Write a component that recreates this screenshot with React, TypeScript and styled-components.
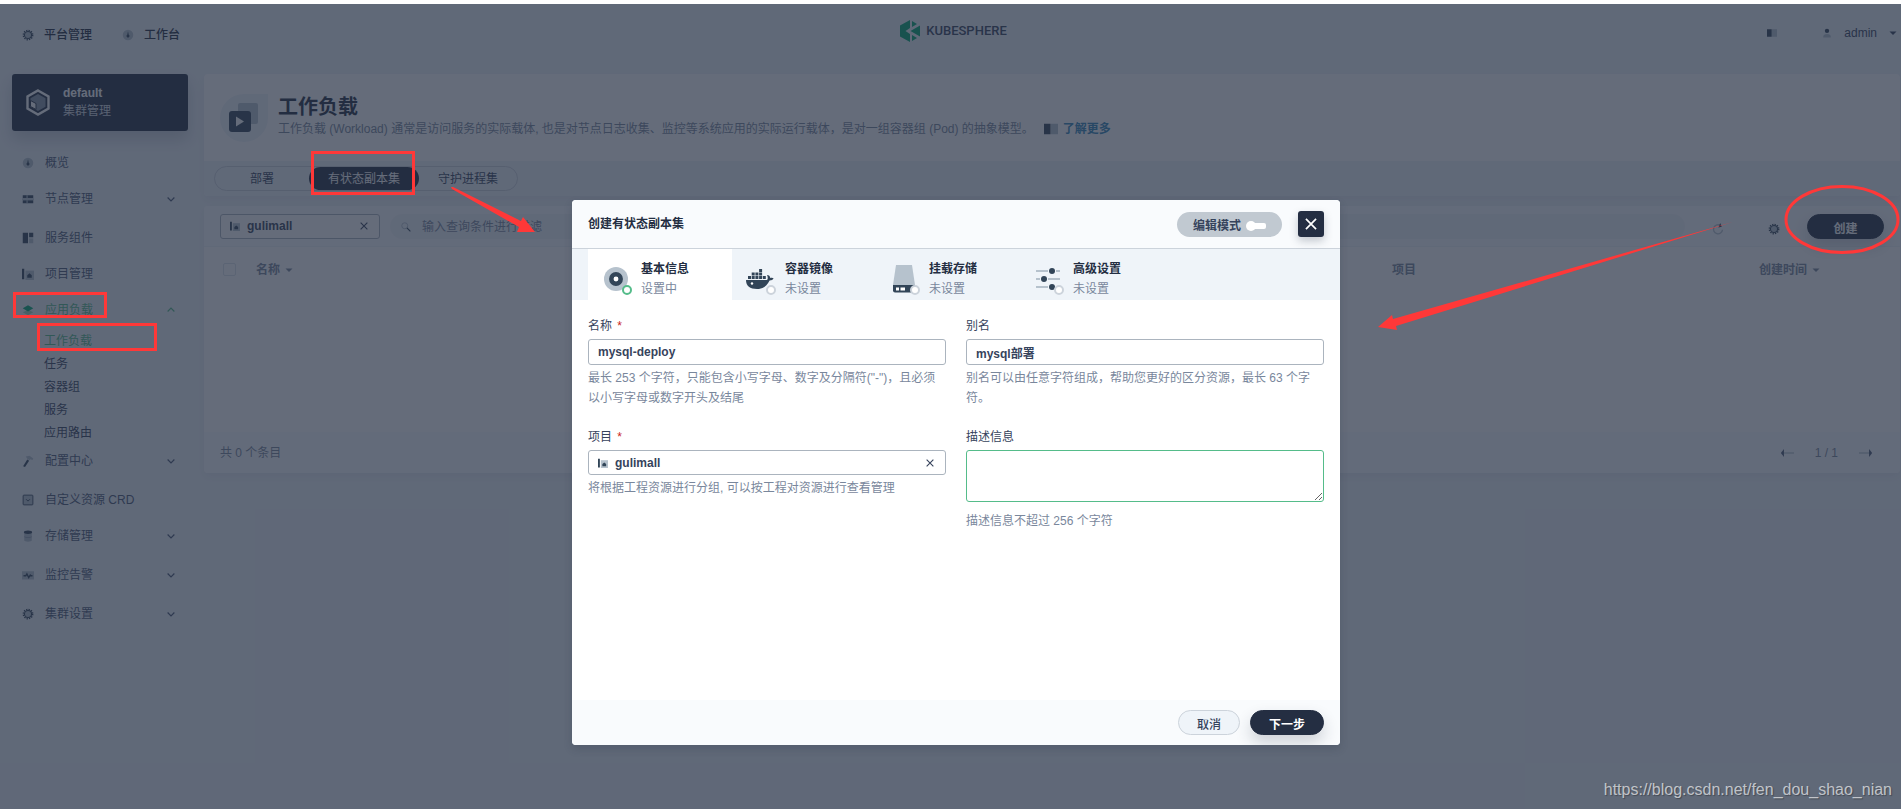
import React from 'react';
import styled, { createGlobalStyle, css } from 'styled-components';

const Global = createGlobalStyle`
  *, *::before, *::after { box-sizing: border-box; }
  html, body { margin: 0; padding: 0; }
  body {
    background: #eff4f9;
    color: #242e42;
    font: 400 12px/20px "Liberation Sans", "Noto Sans CJK SC", sans-serif;
    overflow: hidden;
  }
  button, input, textarea { font: inherit; color: inherit; margin: 0; }
  button { cursor: pointer; }
  a { color: inherit; text-decoration: none; }
  ul { list-style: none; margin: 0; padding: 0; }
  h1, h2, p { margin: 0; }
`;

/* ---------- icons ---------- */

const Svg = styled.svg`
  display: block;
  flex: none;
`;

type IconName =
  | 'gear' | 'gauge' | 'nodes' | 'grid' | 'project' | 'layers' | 'hammer'
  | 'select' | 'database' | 'monitor' | 'book' | 'human' | 'search' | 'refresh'
  | 'close' | 'down' | 'up' | 'caret' | 'prev' | 'next';

const D = '#324558';
const L = '#b6c2cd';

const glyphs: Record<IconName, React.ReactNode> = {
  gear: (
    <>
      <circle cx="8" cy="8" r="6.200" fill="none" stroke={D} strokeWidth="2" strokeDasharray="1.700 1.546" />
      <circle cx="8" cy="8" r="4.700" fill={L} stroke={D} strokeWidth="1.400" />
    </>
  ),
  gauge: (
    <>
      <circle cx="8" cy="8" r="7" fill={L} />
      <path d="M8 3l1 4.500a2 2 0 1 1-2 0z" fill={D} />
    </>
  ),
  nodes: (
    <>
      <path d="M1 3h14v4H1zM1 9.500h14v4H1z" fill={D} />
      <path d="M0 7h16v2.500H0z" fill={L} />
      <path d="M6 3h1.500v4H6zM6 9.500h1.500v4H6z" fill={L} />
    </>
  ),
  grid: (
    <>
      <path d="M1 1h7v14H1zM9.500 1H15v6H9.500z" fill={D} />
      <path d="M9.500 8.500H15V15H9.500z" fill={L} />
    </>
  ),
  project: (
    <>
      <path d="M4.500 3.500H16V16H4.500z" fill={L} />
      <path d="M0 1h3v14H0zM7 9.500L10 7l3 2.500V13H7z" fill={D} />
    </>
  ),
  layers: (
    <>
      <path d="M1 11l7-3.500 7 3.500-7 4z" fill="#a2d8bb" />
      <path d="M1 5.500L8 1.500l7 4L8 10z" fill="#00aa72" />
    </>
  ),
  hammer: (
    <>
      <path d="M5 2l5-1 5 3.500-1 2-3-1-1 1.500-3-2z" fill={L} />
      <path d="M7 6l2.500 1.500L4 16l-2.500-1z" fill={D} />
    </>
  ),
  select: (
    <>
      <rect x="1.500" y="1.500" width="13" height="13" rx="1" fill={L} stroke={D} strokeWidth="1.200" />
      <path d="M5.500 7L8 9.500 10.500 7" fill="none" stroke={D} strokeWidth="1.300" />
    </>
  ),
  database: (
    <>
      <path d="M3 4h10v10c0 2-10 2-10 0z" fill={L} />
      <path d="M3 9c2 1.500 8 1.500 10 0" fill="none" stroke="#8696a5" />
      <ellipse cx="8" cy="3" rx="5.500" ry="2.200" fill={D} />
    </>
  ),
  monitor: (
    <>
      <rect x="0" y="3" width="16" height="11" fill={L} />
      <path d="M2 9h3l1.500-2.500 2.500 5 2-3.500 1 1h2" fill="none" stroke={D} strokeWidth="1.800" />
    </>
  ),
  book: (
    <>
      <path d="M0 2h7.500v12H0z" fill={D} />
      <path d="M8 2h8v12H8z" fill={L} />
    </>
  ),
  human: (
    <>
      <circle cx="8" cy="4.500" r="3.500" fill={D} />
      <path d="M2 14c0-3 2-4.500 6-4.500s6 1.500 6 4.500v1H2z" fill={L} />
    </>
  ),
  search: (
    <>
      <circle cx="6" cy="6" r="4.800" fill="none" stroke={L} strokeWidth="1.600" />
      <path d="M9.500 9.500L15 15" stroke={D} strokeWidth="1.800" />
    </>
  ),
  refresh: (
    <>
      <path d="M11.500 3.500A6 6 0 1 0 14 9" fill="none" stroke={L} strokeWidth="1.800" />
      <path d="M11 0l2 5-4.500 1z" fill={D} />
    </>
  ),
  close: <path d="M3.500 3.500l9 9M12.500 3.500l-9 9" stroke="currentColor" strokeWidth="1.500" />,
  down: <path d="M3.500 6L8 10.500 12.500 6" fill="none" stroke="currentColor" strokeWidth="1.600" />,
  up: <path d="M3.500 10L8 5.500l4.500 4.500" fill="none" stroke="currentColor" strokeWidth="1.600" />,
  caret: <path d="M1 5h14l-7 7z" fill="currentColor" />,
  prev: (
    <>
      <path d="M4 8h12" stroke={L} strokeWidth="1.500" />
      <path d="M4.500 3.500v9L1 8z" fill="#4a5974" />
    </>
  ),
  next: (
    <>
      <path d="M0 8h12" stroke={L} strokeWidth="1.500" />
      <path d="M11.500 3.500v9L15 8z" fill="#4a5974" />
    </>
  ),
};

const Icon = ({ name, size = 12 }: { name: IconName; size?: number }) => (
  <Svg width={size} height={size} viewBox="0 0 16 16" aria-hidden="true">
    {glyphs[name]}
  </Svg>
);

/* ---------- page shell ---------- */

const Page = styled.div`
  position: relative;
  min-height: 100vh;
  border-top: 4px solid #fff;
`;

const TopBar = styled.header`
  display: grid;
  grid-template-columns: 1fr auto 1fr;
  align-items: start;
  height: 70px;
  padding: 0 4px 0 10px;
`;

const TopNav = styled.nav`
  display: flex;
  gap: 30px;
  padding: 21px 0 0 12px;
`;

const TopLink = styled.a`
  display: flex;
  align-items: center;
  gap: 10px;
  color: #242e42;
  font-weight: 500;
`;

const Logo = styled.a`
  display: flex;
  align-items: center;
  gap: 6px;
  height: 22px;
  margin: 16px 0 0;
  color: #36435c;
  font: 500 13px/22px Roboto, "Liberation Sans", sans-serif;
`;

const TopRight = styled.div`
  display: flex;
  justify-content: flex-end;
  align-items: center;
  gap: 45px;
  padding-top: 19px;
`;

const PlainButton = styled.button`
  display: flex;
  align-items: center;
  padding: 0;
  border: 0;
  background: none;
`;

const UserButton = styled(PlainButton)`
  gap: 12px;
  color: #36435c;
`;

const Body = styled.div`
  display: flex;
  gap: 16px;
  padding: 0 1px 0 12px;
`;

/* ---------- sidebar ---------- */

const Sidebar = styled.aside`
  flex: none;
  width: 176px;
`;

const ClusterCard = styled.a`
  display: flex;
  align-items: center;
  gap: 13px;
  height: 57px;
  margin-bottom: 14px;
  padding: 0 14px;
  border-radius: 3px;
  background: #242e42;
  color: #fff;
  box-shadow: 0 8px 16px rgba(36, 46, 66, 0.2);
`;

const ClusterText = styled.span`
  display: flex;
  flex-direction: column;
  padding-bottom: 2px;
  color: #d5dbe2;
  line-height: 18px;
  strong { color: #fff; }
`;

const NavRow = styled.a<{ $group?: boolean; $active?: boolean }>`
  display: flex;
  align-items: center;
  gap: 11px;
  height: 36px;
  margin-bottom: ${(p) => (p.$group && !p.$active ? 3 : 0)}px;
  padding: 0 11px 0 10px;
  color: ${(p) => (p.$active ? '#55bc8a' : '#4a5974')};
`;

const NavLabel = styled.span`
  flex: 1;
`;

const SubNav = styled.ul`
  margin-bottom: -2px;
  padding: 2px 0 0 32px;
`;

const SubLink = styled.a<{ $active?: boolean }>`
  display: block;
  line-height: 23px;
  color: ${(p) => (p.$active ? '#55bc8a' : '#36435c')};
`;

/* ---------- main column ---------- */

const Main = styled.main`
  display: flex;
  flex: 1;
  flex-direction: column;
  gap: 10px;
  min-width: 0;
`;

const Panel = styled.section`
  border-radius: 4px;
  background: #fff;
  box-shadow: 0 4px 8px rgba(36, 46, 66, 0.06);
`;

const Intro = styled.div`
  display: flex;
  align-items: center;
  gap: 10px;
  height: 87px;
  padding: 0 16px;
`;

const IntroText = styled.div`
  padding-bottom: 1px;
`;

const Title = styled.h1`
  font-size: 20px;
  line-height: 24px;
`;

const Lead = styled.p`
  display: flex;
  align-items: center;
  gap: 10px;
  color: #79879c;
`;

const MoreLink = styled.a`
  display: flex;
  align-items: center;
  gap: 5px;
  color: #3385b8;
  font-weight: 700;
`;

const TabBar = styled.div`
  display: flex;
  height: 35px;
  padding: 5px 10px;
  border-radius: 0 0 4px 4px;
  background: #eff4f9;
`;

const Pills = styled.div`
  display: flex;
  height: 25px;
  border: 1px solid #ccd3db;
  border-radius: 13px;
`;

const Pill = styled.button<{ $active?: boolean }>`
  min-width: 94px;
  padding: 0 19px;
  border: 0;
  border-radius: 12px;
  background: ${(p) => (p.$active ? '#242e42' : 'transparent')};
  color: ${(p) => (p.$active ? '#fff' : '#36435c')};
`;

const Toolbar = styled.div`
  display: flex;
  align-items: center;
  gap: 10px;
  height: 41px;
  padding: 0 16px;
  border-bottom: 1px solid #eff4f9;
  background: #f9fbfd;
  border-radius: 4px 4px 0 0;
`;

const SelectBox = styled.div`
  display: flex;
  align-items: center;
  gap: 7px;
  width: 160px;
  height: 25px;
  padding: 0 9px;
  border: 1px solid #abb4be;
  border-radius: 3px;
  background: #fff;
  color: #36435c;
  font-weight: 700;
`;

const WideSelect = styled(SelectBox)`
  width: 100%;
`;

const BareInput = styled.input`
  flex: 1;
  min-width: 0;
  height: 20px;
  padding: 0;
  border: 0;
  outline: 0;
  background: none;
  &::placeholder { color: #79879c; opacity: 1; }
`;

const SearchBox = styled.label`
  display: flex;
  flex: 1;
  align-items: center;
  gap: 11px;
  height: 25px;
  padding: 1px 11px 0;
  border-radius: 13px;
  background: #eff4f9;
`;

const Tools = styled.div`
  display: flex;
  align-items: center;
  gap: 44px;
  padding: 5px 17px 0;
`;

const buttonBase = css`
  height: 25px;
  border-radius: 13px;
  line-height: 20px;
`;

const DarkButton = styled.button<{ $wide?: boolean }>`
  ${buttonBase}
  width: ${(p) => (p.$wide ? 77 : 74)}px;
  padding: 4px 0 0;
  border: 1px solid #242e42;
  background: #242e42;
  color: #fff;
  font-weight: 700;
  box-shadow: 0 8px 16px rgba(36, 46, 66, 0.2);
`;

const Table = styled.table`
  width: 100%;
  height: 185px;
  border-collapse: collapse;
  table-layout: fixed;
  color: #79879c;
  th { padding: 0; height: 45px; text-align: left; font-weight: 700; }
`;

const Col = styled.col<{ $width?: number }>`
  width: ${(p) => (p.$width ? `${p.$width}px` : 'auto')};
`;

const Check = styled.input`
  appearance: none;
  display: block;
  width: 13px;
  height: 13px;
  border: 1px solid #dde3ea;
  border-radius: 2px;
`;

const CheckHead = styled.th`
  ${Check} { margin-left: 19px; }
`;

const Sort = styled(PlainButton)`
  gap: 5px;
  font-weight: 700;
`;

const PanelFoot = styled.div`
  display: flex;
  align-items: center;
  justify-content: space-between;
  height: 41px;
  padding: 0 27px 0 16px;
  border-radius: 0 0 4px 4px;
  background: #f9fbfd;
  color: #79879c;
`;

const Pager = styled.div`
  display: flex;
  align-items: center;
  gap: 21px;
`;

/* ---------- dialog ---------- */

const Mask = styled.div`
  position: absolute;
  inset: 0;
  display: flex;
  align-items: flex-start;
  justify-content: center;
  padding: 196px 0 0 11px;
  background: rgba(35, 45, 65, 0.7);
`;

const Dialog = styled.section`
  display: flex;
  flex-direction: column;
  width: 768px;
  min-height: 545px;
  border-radius: 4px;
  background: #fff;
  box-shadow: 0 4px 8px rgba(36, 46, 66, 0.2);
  overflow: hidden;
`;

const DialogHead = styled.header`
  display: flex;
  align-items: center;
  gap: 16px;
  height: 49px;
  padding: 0 16px;
  border-bottom: 1px solid #ccd3db;
  background: #f9fbfd;
`;

const DialogTitle = styled.h2`
  flex: 1;
  font-size: 12px;
  line-height: 20px;
`;

const ModeButton = styled.button`
  ${buttonBase}
  display: flex;
  align-items: center;
  justify-content: center;
  gap: 5px;
  width: 105px;
  padding: 4px 0 0;
  border: 0;
  background: #c1c9d1;
  color: #36435c;
  font-weight: 700;
`;

const CloseButton = styled.button`
  display: flex;
  align-items: center;
  justify-content: center;
  width: 26px;
  height: 26px;
  padding: 0;
  border: 0;
  border-radius: 3px;
  background: #242e42;
  color: #fff;
  box-shadow: 0 4px 8px rgba(36, 46, 66, 0.25);
`;

const Steps = styled.div`
  display: flex;
  height: 51px;
  padding: 0 16px;
  background: #eff4f9;
`;

const Step = styled.button<{ $active?: boolean }>`
  display: flex;
  align-items: center;
  gap: 9px;
  width: 144px;
  padding: 8px 0 0 12px;
  border: 0;
  background: ${(p) => (p.$active ? '#fff' : 'transparent')};
  text-align: left;
`;

const StepText = styled.span`
  display: flex;
  flex-direction: column;
  color: #79879c;
  strong { color: #242e42; }
`;

const Form = styled.form`
  display: grid;
  grid-template-columns: 1fr 1fr;
  gap: 19px 20px;
  align-content: start;
  flex: 1;
  padding: 16px 16px;
`;

const Field = styled.div`
  display: flex;
  flex-direction: column;
`;

const FieldLabel = styled.label`
  margin-bottom: 3px;
  color: #36435c;
  i { margin-left: 2px; color: #ca2621; font-style: normal; }
`;

const controlBase = css`
  width: 100%;
  border-radius: 3px;
  background: #fff;
  color: #36435c;
  font-weight: 700;
  outline: 0;
`;

const TextInput = styled.input`
  ${controlBase}
  height: 26px;
  padding: 0 9px;
  border: 1px solid #abb4be;
`;

const TextArea = styled.textarea`
  ${controlBase}
  display: block;
  height: 52px;
  margin-bottom: 6px;
  border: 1px solid #55bc8a;
  resize: vertical;
`;

const Hint = styled.p`
  margin-top: 3px;
  color: #79879c;
`;

const DialogFoot = styled.footer`
  display: flex;
  align-items: center;
  justify-content: flex-end;
  gap: 10px;
  height: 45px;
  padding: 0 16px;
  background: #f9fbfd;
`;

const LightButton = styled.button`
  ${buttonBase}
  width: 62px;
  padding: 4px 0 0;
  border: 1px solid #ccd3db;
  background: #eff4f9;
  color: #36435c;
  font-weight: 500;
`;

/* ---------- annotations ---------- */

const Marks = styled.svg`
  position: absolute;
  top: -4px;
  left: 0;
  pointer-events: none;
`;

const Watermark = styled.p`
  position: absolute;
  right: 9px;
  bottom: 9px;
  color: rgba(255, 255, 255, 0.65);
  font-size: 16px;
  line-height: 20px;
  text-shadow: 1px 1px 1px rgba(0, 0, 0, 0.3);
`;

/* ---------- step drawings ---------- */

const Badge = ({ color }: { color: string }) => (
  <circle cx="27" cy="27" r="4" fill="#fff" stroke={color} strokeWidth="2" />
);

const stepArt = [
  <>
    <circle cx="16" cy="16" r="12" fill={L} />
    <circle cx="16" cy="16" r="4.700" fill="#fff" stroke={D} strokeWidth="4.500" />
  </>,
  <>
    <path
      d="M2 17h21c1-1 1-3 0-5 2 0 3 1 3.300 3 1.500-.5 2.700-.2 3.300.3-.8 1.700-2 2.200-4 2.200C23 23 19 26 13 26 6 26 2 23 2 17z"
      fill={D}
    />
    <path d="M4 13h3v3H4zM7.700 13h3v3h-3zM11.400 13h3v3h-3zM15.100 13h3v3h-3zM18.800 13h3v3h-3zM7.700 9.500h3v3h-3zM11.400 9.500h3v3h-3zM15.100 9.500h3v3h-3zM15.100 6h3v3h-3z" fill={D} />
    <circle cx="8" cy="20.500" r="1.200" fill="#fff" />
  </>,
  <>
    <path d="M8 2h16l3 20H5z" fill={L} />
    <path d="M5 22h22v5.500a2 2 0 0 1-2 2H7a2 2 0 0 1-2-2z" fill={D} />
    <path d="M8 24.500h3v3H8zM12.500 24.500h4.500v3h-4.500z" fill="#fff" />
  </>,
  <>
    <path d="M4 8h12M24 8h4M4 16h4M16 16h12M4 24h12" stroke={L} strokeWidth="2" />
    <circle cx="20" cy="8" r="3" fill={D} />
    <circle cx="12" cy="16" r="3" fill={D} />
    <circle cx="20" cy="24" r="3" fill={D} />
  </>,
];

const steps = [
  { title: '基本信息', state: '设置中' },
  { title: '容器镜像', state: '未设置' },
  { title: '挂载存储', state: '未设置' },
  { title: '高级设置', state: '未设置' },
];

const nav: { icon: IconName; label: string; group?: boolean; children?: string[] }[] = [
  { icon: 'gauge', label: '概览' },
  { icon: 'nodes', label: '节点管理', group: true },
  { icon: 'grid', label: '服务组件' },
  { icon: 'project', label: '项目管理' },
  { icon: 'layers', label: '应用负载', group: true, children: ['工作负载', '任务', '容器组', '服务', '应用路由'] },
  { icon: 'hammer', label: '配置中心', group: true },
  { icon: 'select', label: '自定义资源 CRD' },
  { icon: 'database', label: '存储管理', group: true },
  { icon: 'monitor', label: '监控告警', group: true },
  { icon: 'gear', label: '集群设置', group: true },
];

export default function App() {
  return (
    <Page>
      <Global />
      <TopBar>
        <TopNav>
          <TopLink href="#platform"><Icon name="gear" />平台管理</TopLink>
          <TopLink href="#workbench"><Icon name="gauge" />工作台</TopLink>
        </TopNav>
        <Logo href="#home">
          <Svg width="20" height="22" viewBox="0 0 20 22" aria-hidden="true">
            <path d="M10 0v8L5.500 11l4.500 3v8L0 16.500v-11zM12 1l5 3-5 3zM20 5.500v11L10.500 11zM12 15l5 3-5 3z" fill="#00a971" />
          </Svg>
          KUBESPHERE
        </Logo>
        <TopRight>
          <PlainButton aria-label="文档"><Icon name="book" size={10} /></PlainButton>
          <UserButton>
            <Icon name="human" size={10} />
            admin
            <Icon name="caret" size={8} />
          </UserButton>
        </TopRight>
      </TopBar>

      <Body>
        <Sidebar>
          <ClusterCard href="#cluster">
            <Svg width="24" height="27" viewBox="0 0 24 27" aria-hidden="true">
              <path d="M12 1.500l10.500 6v12L12 25.500l-10.500-6v-12z" fill="none" stroke="#fff" strokeWidth="2.400" />
              <path d="M12 5l7.500 4.300v8.400L12 22l-7.500-4.300V9.300z" fill="#8794a4" />
              <path d="M4.500 11.500l5.500 3v6l-5.500-3z" fill="#fff" stroke="#242e42" />
            </Svg>
            <ClusterText>
              <strong>default</strong>
              <span>集群管理</span>
            </ClusterText>
          </ClusterCard>
          <nav>
            {nav.map((item) => (
              <React.Fragment key={item.label}>
                <NavRow href="#nav" $group={item.group} $active={!!item.children}>
                  <Icon name={item.icon} />
                  <NavLabel>{item.label}</NavLabel>
                  {item.group && <Icon name={item.children ? 'up' : 'down'} />}
                </NavRow>
                {item.children && (
                  <SubNav>
                    {item.children.map((c, i) => (
                      <li key={c}><SubLink href="#sub" $active={i === 0}>{c}</SubLink></li>
                    ))}
                  </SubNav>
                )}
              </React.Fragment>
            ))}
          </nav>
        </Sidebar>

        <Main>
          <Panel>
            <Intro>
              <Svg width="48" height="48" viewBox="0 0 48 48" aria-hidden="true">
                <path d="M24 0h24v24a24 24 0 1 1-24-24z" fill="#eff4f9" />
                <rect x="18" y="9" width="20" height="21" rx="2" fill={L} />
                <rect x="9" y="17" width="22" height="21" rx="3" fill={D} />
                <path d="M16 22.500v10l8-5z" fill="#fff" />
              </Svg>
              <IntroText>
                <Title>工作负载</Title>
                <Lead>
                  工作负载 (Workload) 通常是访问服务的实际载体, 也是对节点日志收集、监控等系统应用的实际运行载体，是对一组容器组 (Pod) 的抽象模型。
                  <MoreLink href="#more"><Icon name="book" size={14} />了解更多</MoreLink>
                </Lead>
              </IntroText>
            </Intro>
            <TabBar>
              <Pills>
                <Pill>部署</Pill>
                <Pill $active>有状态副本集</Pill>
                <Pill>守护进程集</Pill>
              </Pills>
            </TabBar>
          </Panel>

          <Panel>
            <Toolbar>
              <SelectBox>
                <Icon name="project" size={10} />
                <BareInput aria-label="项目筛选" defaultValue="gulimall" />
                <PlainButton aria-label="清除"><Icon name="close" size={12} /></PlainButton>
              </SelectBox>
              <SearchBox>
                <Icon name="search" size={10} />
                <BareInput placeholder="输入查询条件进行过滤" />
              </SearchBox>
              <Tools>
                <PlainButton aria-label="刷新"><Icon name="refresh" /></PlainButton>
                <PlainButton aria-label="设置"><Icon name="gear" /></PlainButton>
              </Tools>
              <DarkButton $wide>创建</DarkButton>
            </Toolbar>
            <Table>
              <colgroup>
                <Col $width={52} />
                <Col />
                <Col $width={367} />
                <Col $width={141} />
              </colgroup>
              <thead>
                <tr>
                  <CheckHead><Check type="checkbox" aria-label="全选" /></CheckHead>
                  <th><Sort>名称 <Icon name="caret" size={8} /></Sort></th>
                  <th>项目</th>
                  <th><Sort>创建时间 <Icon name="caret" size={8} /></Sort></th>
                </tr>
              </thead>
              <tbody><tr><td colSpan={4} /></tr></tbody>
            </Table>
            <PanelFoot>
              <span>共 0 个条目</span>
              <Pager>
                <PlainButton aria-label="上一页"><Icon name="prev" size={14} /></PlainButton>
                <span>1 / 1</span>
                <PlainButton aria-label="下一页"><Icon name="next" size={14} /></PlainButton>
              </Pager>
            </PanelFoot>
          </Panel>
        </Main>
      </Body>

      <Mask>
        <Dialog role="dialog" aria-labelledby="dialog-title">
          <DialogHead>
            <DialogTitle id="dialog-title">创建有状态副本集</DialogTitle>
            <ModeButton>
              编辑模式
              <Svg width="20" height="10" viewBox="0 0 20 10" aria-hidden="true">
                <rect x="4" y="2" width="16" height="6" rx="2" fill="#fff" />
                <circle cx="5" cy="5" r="5" fill="#fff" />
              </Svg>
            </ModeButton>
            <CloseButton aria-label="关闭"><Icon name="close" size={18} /></CloseButton>
          </DialogHead>
          <Steps>
            {steps.map((s, i) => (
              <Step key={s.title} $active={i === 0}>
                <Svg width="32" height="32" viewBox="0 0 32 32" aria-hidden="true">
                  {stepArt[i]}
                  <Badge color={i === 0 ? '#55bc8a' : '#ccd3db'} />
                </Svg>
                <StepText><strong>{s.title}</strong>{s.state}</StepText>
              </Step>
            ))}
          </Steps>
          <Form>
            <Field>
              <FieldLabel htmlFor="name">名称 <i>*</i></FieldLabel>
              <TextInput id="name" defaultValue="mysql-deploy" />
              <Hint>最长 253 个字符，只能包含小写字母、数字及分隔符("-")，且必须以小写字母或数字开头及结尾</Hint>
            </Field>
            <Field>
              <FieldLabel htmlFor="alias">别名</FieldLabel>
              <TextInput id="alias" defaultValue="mysql部署" />
              <Hint>别名可以由任意字符组成，帮助您更好的区分资源，最长 63 个字符。</Hint>
            </Field>
            <Field>
              <FieldLabel htmlFor="project">项目 <i>*</i></FieldLabel>
              <WideSelect>
                <Icon name="project" size={10} />
                <BareInput id="project" defaultValue="gulimall" />
                <PlainButton type="button" aria-label="清除"><Icon name="close" size={12} /></PlainButton>
              </WideSelect>
              <Hint>将根据工程资源进行分组, 可以按工程对资源进行查看管理</Hint>
            </Field>
            <Field>
              <FieldLabel htmlFor="desc">描述信息</FieldLabel>
              <TextArea id="desc" />
              <Hint>描述信息不超过 256 个字符</Hint>
            </Field>
          </Form>
          <DialogFoot>
            <LightButton>取消</LightButton>
            <DarkButton>下一步</DarkButton>
          </DialogFoot>
        </Dialog>
      </Mask>

      <Marks width="1901" height="480" aria-hidden="true">
        <g fill="none" stroke="#ff3838" strokeWidth="3">
          <rect x="312.500" y="152.500" width="101" height="41" />
          <rect x="14.500" y="293.500" width="91" height="23" />
          <rect x="38.500" y="324.500" width="117" height="25" />
          <ellipse cx="1842" cy="219.500" rx="56" ry="33" />
        </g>
        <path d="M451 187L453 187 521 221 523 217 535 232 517 232 519 227 452 189z" fill="#ff3838" />
        <path d="M1733 222L1396 326 1397 330 1378 327 1392 315 1393 319z" fill="#ff3838" />
      </Marks>
      <Watermark>https://blog.csdn.net/fen_dou_shao_nian</Watermark>
    </Page>
  );
}
